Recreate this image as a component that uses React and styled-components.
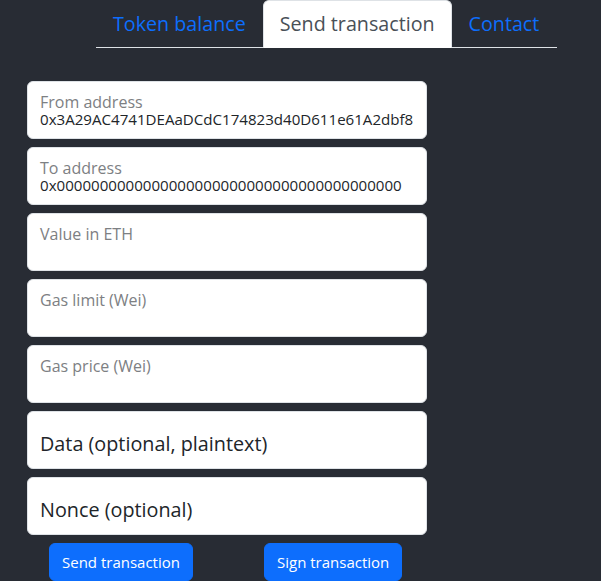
import React from 'react'
import styled, { createGlobalStyle } from 'styled-components'

const GlobalStyle = createGlobalStyle`
  html, body {
    margin: 0;
    padding: 0;
    background: #282c34;
    font-family: "Open Sans", "Noto Sans", sans-serif;
  }
`

const tabs = ['Token balance', 'Send transaction', 'Contact']

const fields = [
  { label: 'From address', value: '0x3A29AC4741DEAaDCdC174823d40D611e61A2dbf8' },
  { label: 'To address', value: '0x0000000000000000000000000000000000000000' },
  { label: 'Value in ETH' },
  { label: 'Gas limit (Wei)' },
  { label: 'Gas price (Wei)' },
]

const placeholders = ['Data (optional, plaintext)', 'Nonce (optional)']

const App = () => {
  return (
    <Page>
      <GlobalStyle />
      <TabBar>
        {tabs.map((tab) => (
          <TabLink key={tab} active={tab === 'Send transaction'}>{tab}</TabLink>
        ))}
      </TabBar>

      <Form>
        {fields.map((f) => (
          <FloatingField key={f.label}>
            <FieldLabel>{f.label}</FieldLabel>
            {f.value && <FieldValue>{f.value}</FieldValue>}
          </FloatingField>
        ))}
        {placeholders.map((p) => (
          <PlainField key={p}>{p}</PlainField>
        ))}
        <ButtonRow>
          <Button>Send transaction</Button>
          <Button>Sign transaction</Button>
        </ButtonRow>
      </Form>
    </Page>
  )
}

const Page = styled.div`
  min-height: 581px;
  background: #282c34;
`

const TabBar = styled.nav`
  display: flex;
  margin-left: 96px;
  width: 461px;
  border-bottom: 1px solid #dee2e6;
`

const TabLink = styled.a`
  display: block;
  padding: 8px 16px;
  margin-bottom: -1px;
  font-size: 19.7px;
  line-height: 30px;
  color: ${props => props.active ? '#495057' : '#0d6efd'};
  background: ${props => props.active ? '#fff' : 'transparent'};
  border: 1px solid ${props => props.active ? '#dee2e6' : 'transparent'};
  border-bottom-color: ${props => props.active ? '#fff' : 'transparent'};
  border-radius: 6px 6px 0 0;
  cursor: pointer;
`

const Form = styled.div`
  display: flex;
  flex-direction: column;
  gap: 8px;
  width: 400px;
  margin: 33px 0 0 27px;
`

const FieldBox = styled.div`
  box-sizing: border-box;
  height: 58px;
  background: #fff;
  border: 1px solid #dee2e6;
  border-radius: 6px;
  padding: 0 12px;
  overflow: hidden;
`

const FloatingField = styled(FieldBox)`
  padding-top: 11px;
`

const FieldLabel = styled.div`
  font-size: 16px;
  line-height: 18px;
  color: #7d8083;
`

const FieldValue = styled.div`
  font-size: 15.1px;
  line-height: 16px;
  color: #212529;
  white-space: nowrap;
  overflow: hidden;
`

const PlainField = styled(FieldBox)`
  display: flex;
  align-items: center;
  padding-top: 6px;
  font-size: 19.8px;
  color: #212529;
`

const ButtonRow = styled.div`
  display: flex;
  gap: 71px;
  padding-left: 22px;
`

const Button = styled.button`
  padding: 6px 12px;
  font-family: inherit;
  font-size: 15px;
  line-height: 24px;
  color: #fff;
  background: #0d6efd;
  border: 1px solid #0d6efd;
  border-radius: 6px;
  cursor: pointer;
`

export default App
